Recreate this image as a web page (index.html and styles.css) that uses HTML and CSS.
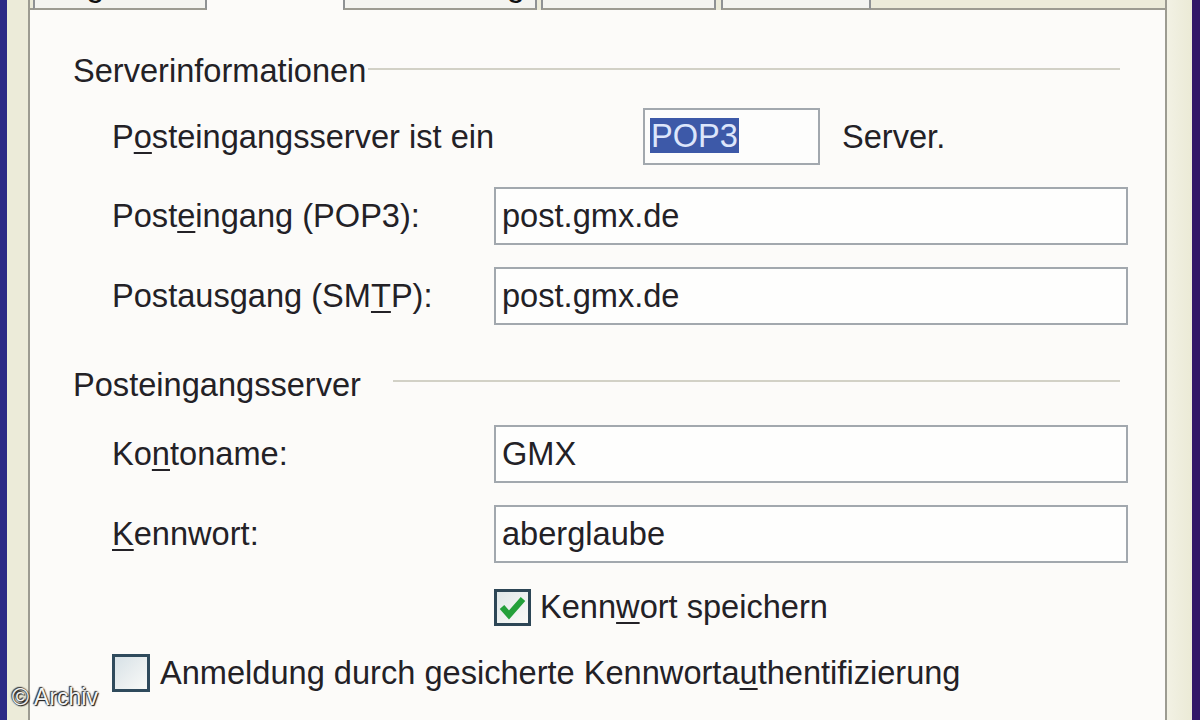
FILE: index.html
```html
<!DOCTYPE html>
<html lang="de">
<head>
    <meta charset="UTF-8">
    <meta name="viewport" content="width=device-width, initial-scale=1.0">
    <title>Eigenschaften - Server</title>
    <link rel="stylesheet" href="styles.css">
</head>
<body>
    <div class="screen">
        <div class="edge edge-left"></div>
        <div class="side side-left"></div>

        <div class="dialog">
            <div class="tabs">
                <div class="tab-gap"></div>
                <div class="tab tab-1"><span>Allgemein</span></div>
                <div class="tab tab-active tab-2"><span>Server</span></div>
                <div class="tab tab-3"><span>Verbindung</span></div>
                <div class="tab tab-4"><span>Sicherheit</span></div>
                <div class="tab tab-5"><span>Erweitert</span></div>
                <div class="tab-rest"></div>
            </div>

            <div class="panel">
                <div class="group-head">
                    <span>Serverinformationen</span>
                    <div class="line line-1"></div>
                </div>

                <div class="row row-type">
                    <label class="label label-wide">P<u>o</u>steingangsserver ist ein</label>
                    <div class="type-box"><span class="selected">POP3</span></div>
                    <span class="after">Server.</span>
                </div>

                <div class="row row-field">
                    <label class="label">Post<u>e</u>ingang (POP3):</label>
                    <div class="field">post.gmx.de</div>
                </div>

                <div class="row row-field">
                    <label class="label">Postausgang (SM<u>T</u>P):</label>
                    <div class="field">post.gmx.de</div>
                </div>

                <div class="group-head group-head-2">
                    <span>Posteingangsserver</span>
                    <div class="line line-2"></div>
                </div>

                <div class="row row-field row-first">
                    <label class="label">Ko<u>n</u>toname:</label>
                    <div class="field">GMX</div>
                </div>

                <div class="row row-field">
                    <label class="label"><u>K</u>ennwort:</label>
                    <div class="field">aberglaube</div>
                </div>

                <div class="row row-check">
                    <div class="indent"></div>
                    <svg class="checkbox" width="37" height="37" viewBox="0 0 37 37">
                        <defs>
                            <linearGradient id="cbfill" x1="0" y1="0" x2="1" y2="1">
                                <stop offset="0" stop-color="#dfe6e8"/>
                                <stop offset="1" stop-color="#fbfbf8"/>
                            </linearGradient>
                        </defs>
                        <rect x="1.5" y="1.5" width="34" height="34" fill="url(#cbfill)" stroke="#2d4656" stroke-width="3"/>
                        <polyline points="8,18 15,26 29,10" fill="none" stroke="#23a03a" stroke-width="6" stroke-linejoin="miter"/>
                    </svg>
                    <span class="check-label">Kenn<u>w</u>ort speichern</span>
                </div>

                <div class="row row-check row-spa">
                    <svg class="checkbox" width="38" height="38" viewBox="0 0 38 38">
                        <defs>
                            <linearGradient id="cbfill2" x1="0" y1="0" x2="1" y2="1">
                                <stop offset="0" stop-color="#d6e0e6"/>
                                <stop offset="1" stop-color="#fbfbf8"/>
                            </linearGradient>
                        </defs>
                        <rect x="1.5" y="1.5" width="35" height="35" fill="url(#cbfill2)" stroke="#2f4a5c" stroke-width="3"/>
                    </svg>
                    <span class="check-label">Anmeldung durch gesicherte Kennworta<u>u</u>thentifizierung</span>
                </div>
            </div>
        </div>

        <div class="side side-right"></div>
        <div class="edge edge-right"></div>

        <div class="credit">&copy; Archiv</div>
    </div>
</body>
</html>
```

FILE: styles.css
```css
*{
    margin: 0;
    padding: 0;
    box-sizing: border-box;
}

body{
    width: 1200px;
    height: 720px;
    overflow: hidden;
    font-family: "Liberation Sans", Arial, sans-serif;
    font-size: 32.6px;
    color: #232126;
    background-color: #ecebd9;
}

.screen{
    position: relative;
    display: flex;
    width: 1200px;
    height: 720px;
}

.edge-left{
    width: 7px;
    background-color: #2c2a86;
}

.edge-right{
    width: 8px;
    background-color: #331868;
}

.side-left{
    width: 21px;
    background-color: #ecebd9;
}

.side-right{
    width: 25px;
    background: linear-gradient(to right, #f2f1e4, #ebead6);
}

.dialog{
    width: 1139px;
    display: flex;
    flex-direction: column;
}

/* tab strip, only the lower edge is in view */
.tabs{
    display: flex;
    height: 10px;
}

.tab-gap{
    width: 5px;
    border-left: 2px solid #9c9b91;
    border-bottom: 2px solid #9c9b91;
}

.tab{
    height: 10px;
    overflow: hidden;
    background-color: #f4f4f0;
    border-left: 2px solid #8f9294;
    border-right: 2px solid #8f9294;
    border-bottom: 2px solid #9c9b91;
    padding-left: 15px;
    color: #111;
    white-space: nowrap;
}

.tab span{
    display: block;
    line-height: 38px;
    margin-top: -34px;
}

.tab-1{ width: 174px; }
.tab-active{
    width: 136px;
    background-color: #fcfbf9;
    border-left: none;
    border-right: none;
    border-bottom: none;
}
.tab-3{ width: 194px; }
.tab-4{ width: 175px; margin-left: 4px; }
.tab-5{ width: 150px; margin-left: 5px; }

.tab-rest{
    flex: 1;
    border-bottom: 2px solid #9c9b91;
    border-right: 2px solid #9c9b91;
}

.panel{
    flex: 1;
    background-color: #fcfbf9;
    border-left: 2px solid #9c9b91;
    border-right: 2px solid #9c9b91;
    padding: 42px 45px 0 43px;
}

.group-head{
    display: flex;
    align-items: center;
    height: 38px;
    line-height: 38px;
}

.group-head-2{
    margin-top: 41px;
}

.group-head .line{
    flex: 1;
    border-top: 2px solid #d2d1c6;
    margin-bottom: 5px;
}

.line-1{ margin-left: 2px; }
.line-2{ margin-left: 32px; margin-bottom: 9px !important; }

.row{
    display: flex;
    align-items: center;
    margin-left: 39px;
}

.row > *{
    flex-shrink: 0;
}

.label{
    width: 382px;
    line-height: 38px;
}

.label-wide{
    width: 531px;
}

u{
    text-decoration-thickness: 2px;
    text-underline-offset: 4px;
}

.row-type{
    margin-top: 18px;
}

.type-box{
    width: 177px;
    height: 57px;
    border: 2px solid #a2a8ae;
    background-color: #fdfdfc;
    padding: 7px 0 0 5px;
}

.selected{
    display: inline-block;
    height: 35px;
    line-height: 35px;
    padding: 0 1px;
    background-color: #3d59a8;
    color: #dde6fb;
}

.after{
    margin-left: 22px;
    line-height: 38px;
}

.row-field{
    margin-top: 22px;
}

.row-first{
    margin-top: 21px;
}

.field{
    width: 634px;
    height: 58px;
    border: 2px solid #a2a8ae;
    background-color: #fefefd;
    padding-left: 6px;
    display: flex;
    align-items: center;
}

.row-check{
    margin-top: 25px;
}

.row-spa{
    margin-top: 28px;
}

.indent{
    width: 382px;
}

.checkbox{
    display: block;
}

.check-label{
    margin-left: 9px;
    line-height: 38px;
}

.row-spa .check-label{
    margin-left: 10px;
}

.credit{
    position: absolute;
    left: 12px;
    top: 684px;
    font-size: 23px;
    line-height: 26px;
    color: #f4f4f4;
    text-shadow: 0 0 2px #222, 1px 1px 1px #111, -1px -1px 1px #333;
}
```
